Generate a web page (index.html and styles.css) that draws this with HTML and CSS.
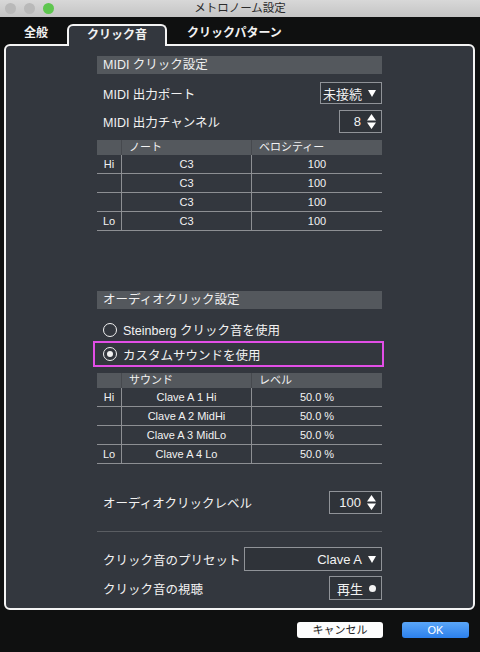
FILE: index.html
```html
<!DOCTYPE html>
<html>
<head>
  <meta charset="utf-8">
  <link rel="stylesheet" href="styles.css">
</head>
<body>

  <div class="titlebar">
    <div class="lights">
      <span class="light"></span>
      <span class="light"></span>
      <span class="light green"></span>
    </div>
    <div class="title">メトロノーム設定</div>
  </div>

  <div class="tabs">
    <div class="tab tab-general">全般</div>
    <div class="tab active">クリック音</div>
    <div class="tab tab-pattern">クリックパターン</div>
  </div>

  <div class="panel">
    <div class="column">

      <div class="section-head midi-head">MIDI クリック設定</div>

      <div class="row port-row">
        <span class="label">MIDI 出力ポート</span>
        <div class="box select port-select">未接続
          <svg class="arrow" width="8" height="7" viewBox="0 0 8 7"><path d="M0 0H8L4 7Z" fill="#fff"/></svg>
        </div>
      </div>

      <div class="row channel-row">
        <span class="label">MIDI 出力チャンネル</span>
        <div class="box spin channel-spin">8
          <svg class="updown" width="9" height="15" viewBox="0 0 9 15"><path d="M0 6.5H9L4.5 0Z M0 8.5H9L4.5 15Z" fill="#fff"/></svg>
        </div>
      </div>

      <div class="grid midi-grid">
        <div class="gh"></div><div class="gh left">ノート</div><div class="gh left">ベロシティー</div>
        <div class="gc key">Hi</div><div class="gc">C3</div><div class="gc">100</div>
        <div class="gc key"></div><div class="gc">C3</div><div class="gc">100</div>
        <div class="gc key"></div><div class="gc">C3</div><div class="gc">100</div>
        <div class="gc key">Lo</div><div class="gc">C3</div><div class="gc">100</div>
      </div>

      <div class="section-head audio-head">オーディオクリック設定</div>

      <div class="radio radio-first">
        <span class="dot"></span>
        <span class="label">Steinberg クリック音を使用</span>
      </div>
      <div class="radio radio-custom">
        <span class="dot checked"></span>
        <span class="label">カスタムサウンドを使用</span>
      </div>

      <div class="grid sound-grid">
        <div class="gh"></div><div class="gh left">サウンド</div><div class="gh left">レベル</div>
        <div class="gc key">Hi</div><div class="gc">Clave A 1 Hi</div><div class="gc">50.0 %</div>
        <div class="gc key"></div><div class="gc">Clave A 2 MidHi</div><div class="gc">50.0 %</div>
        <div class="gc key"></div><div class="gc">Clave A 3 MidLo</div><div class="gc">50.0 %</div>
        <div class="gc key">Lo</div><div class="gc">Clave A 4 Lo</div><div class="gc">50.0 %</div>
      </div>

      <div class="row level-row">
        <span class="label">オーディオクリックレベル</span>
        <div class="box spin level-spin">100
          <svg class="updown" width="9" height="15" viewBox="0 0 9 15"><path d="M0 6.5H9L4.5 0Z M0 8.5H9L4.5 15Z" fill="#fff"/></svg>
        </div>
      </div>

      <div class="divider"></div>

      <div class="row preset-row">
        <span class="label">クリック音のプリセット</span>
        <div class="box select preset-select">Clave A
          <svg class="arrow" width="8" height="7" viewBox="0 0 8 7"><path d="M0 0H8L4 7Z" fill="#fff"/></svg>
        </div>
      </div>

      <div class="row preview-row">
        <span class="label">クリック音の視聴</span>
        <div class="box play-btn">再生 <span class="play-dot"></span></div>
      </div>

    </div>
  </div>

  <div class="buttons">
    <div class="btn cancel">キャンセル</div>
    <div class="btn ok">OK</div>
  </div>

</body>
</html>
```

FILE: styles.css
```css
* {
  box-sizing: border-box;
}

body {
  margin: 0;
  width: 480px;
  height: 652px;
  background-color: #0f1010;
  font-family: 'Liberation Sans', 'Noto Sans CJK JP', sans-serif;
  color: #f2f2f2;
  overflow: hidden;
}

/* title bar */
.titlebar {
  height: 17px;
  background: linear-gradient(180deg, #d8d8d8, #c4c4c4);
  display: flex;
  align-items: center;
  position: relative;
}
.lights {
  display: flex;
  gap: 8px;
  padding-left: 5px;
}
.light {
  width: 11px;
  height: 11px;
  border-radius: 50%;
  background-color: #b9b9b9;
}
.light.green {
  background-color: #5ec64f;
}
.title {
  position: absolute;
  left: 0;
  right: 0;
  text-align: center;
  font-size: 11.5px;
  color: #2c2c2c;
  line-height: 17px;
}

/* tabs */
.tabs {
  height: 27px;
  display: flex;
  align-items: flex-end;
  padding-left: 24px;
  font-size: 12px;
  font-weight: bold;
}
.tab {
  height: 20px;
  line-height: 19px;
}
.tab-general {
  width: 43px;
}
.active {
  width: 100px;
  text-align: center;
  background-color: #33373e;
  border: 2px solid #f4f4f4;
  border-bottom: none;
  border-radius: 6px 6px 0 0;
  margin-bottom: -2px;
  height: 22px;
  position: relative;
  z-index: 1;
}
.tab-pattern {
  padding-left: 20px;
}

/* panel */
.panel {
  margin: 0 5px 0 4px;
  height: 566px;
  background-color: #33373e;
  border: 2px solid #f4f4f4;
  border-radius: 6px;
}
.column {
  width: 285px;
  margin-left: 91px;
  display: flex;
  flex-direction: column;
}

.section-head {
  height: 18px;
  background-color: #54585d;
  font-size: 12.5px;
  line-height: 18px;
  padding-left: 6px;
  color: #f0f0f0;
}
.midi-head {
  margin-top: 10px;
}
.audio-head {
  margin-top: 60px;
}

.row {
  display: flex;
  align-items: center;
  justify-content: space-between;
  padding-left: 6px;
}
.label {
  font-size: 12.5px;
  white-space: nowrap;
}

.box {
  border: 1px solid #909398;
  background-color: #2f3339;
  display: flex;
  align-items: center;
  justify-content: flex-end;
  font-size: 13px;
  gap: 6px;
  padding-right: 5px;
  white-space: nowrap;
}
.select {
  height: 22px;
}
.spin {
  height: 23px;
}

.port-row {
  margin-top: 8px;
}
.port-select {
  width: 62px;
}
.channel-row {
  margin-top: 6px;
}
.channel-spin {
  width: 43px;
}

/* tables */
.grid {
  display: grid;
  grid-template-columns: 24px 130px 131px;
  font-size: 11px;
  color: #f2f2f2;
}
.gh {
  height: 15px;
  background-color: #54585d;
  line-height: 15px;
  border-left: 1px solid #46494e;
}
.gh:first-child {
  border-left: none;
}
.gh.left {
  padding-left: 7px;
}
.gc {
  height: 19px;
  line-height: 18px;
  text-align: center;
  color: #f2f2f2;
  border-bottom: 1px solid #8d8f93;
  border-left: 1px solid #8d8f93;
}
.gc.key {
  border-left: none;
}
.midi-grid {
  margin-top: 7px;
}
.sound-grid {
  margin-top: 6px;
}

/* radios */
.radio {
  display: flex;
  align-items: center;
  gap: 6px;
  padding-left: 6px;
  height: 26px;
}
.radio-first {
  margin-top: 9px;
  height: 23px;
}
.radio-custom {
  margin-left: -4px;
  margin-right: -2px;
  padding-left: 8px;
  border: 2px solid #e24ee6;
}
.dot {
  width: 14px;
  height: 14px;
  border: 1.5px solid #f2f2f2;
  border-radius: 50%;
  display: flex;
  align-items: center;
  justify-content: center;
}
.dot.checked::after {
  content: '';
  width: 6px;
  height: 6px;
  border-radius: 50%;
  background-color: #f2f2f2;
}

.level-row {
  margin-top: 27px;
}
.level-spin {
  width: 53px;
}

.divider {
  height: 1px;
  background-color: #5a5d62;
  margin-top: 17px;
}

.preset-row {
  margin-top: 15px;
}
.preset-select {
  width: 138px;
  height: 24px;
}
.preview-row {
  margin-top: 5px;
}
.play-btn {
  width: 53px;
  height: 24px;
}
.play-dot {
  width: 7px;
  height: 7px;
  border-radius: 50%;
  background-color: #f2f2f2;
}

/* bottom buttons */
.buttons {
  display: flex;
  justify-content: flex-end;
  gap: 19px;
  padding-right: 11px;
  margin-top: 12px;
}
.btn {
  height: 16px;
  border-radius: 3px;
  font-size: 11px;
  line-height: 16px;
  text-align: center;
}
.cancel {
  width: 86px;
  background-color: #fdfdfd;
  color: #222;
}
.ok {
  width: 67px;
  background: linear-gradient(180deg, #5aa6f8, #2c80ec);
  color: #fff;
}
```
